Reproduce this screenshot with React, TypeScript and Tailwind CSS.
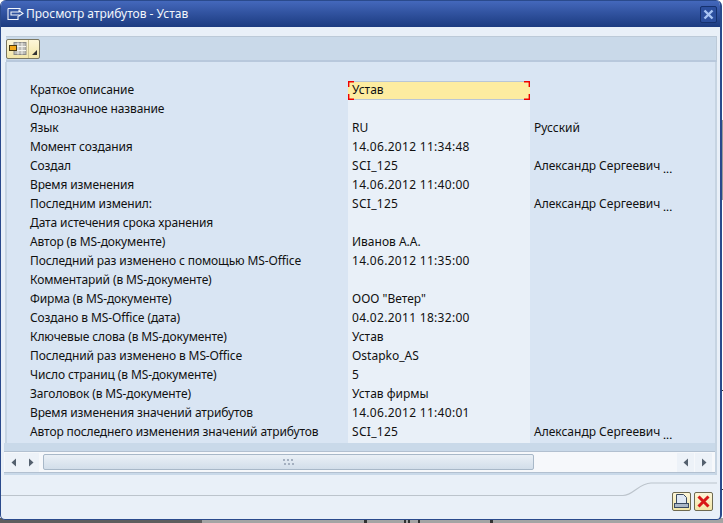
import React from "react";

const rows: [string, string, string, boolean?][] = [
  ["Краткое описание", "", ""],
  ["Однозначное название", "", ""],
  ["Язык", "RU", "Русский"],
  ["Момент создания", "14.06.2012 11:34:48", ""],
  ["Создал", "SCI_125", "Александр Сергеевич", true],
  ["Время изменения", "14.06.2012 11:40:00", ""],
  ["Последним изменил:", "SCI_125", "Александр Сергеевич", true],
  ["Дата истечения срока хранения", "", ""],
  ["Автор (в MS-документе)", "Иванов А.А.", ""],
  ["Последний раз изменено с помощью MS-Office", "14.06.2012 11:35:00", ""],
  ["Комментарий (в MS-документе)", "", ""],
  ["Фирма (в MS-документе)", "ООО \"Ветер\"", ""],
  ["Создано в MS-Office (дата)", "04.02.2011 18:32:00", ""],
  ["Ключевые слова (в MS-документе)", "Устав", ""],
  ["Последний раз изменено в MS-Office", "Ostapko_AS", ""],
  ["Число страниц (в MS-документе)", "5", ""],
  ["Заголовок (в MS-документе)", "Устав фирмы", ""],
  ["Время изменения значений атрибутов", "14.06.2012 11:40:01", ""],
  ["Автор последнего изменения значений атрибутов", "SCI_125", "Александр Сергеевич", true],
];

function Arrow({ dir }: { dir: "l" | "r" }) {
  return (
    <div className="w-[17px] h-[19px] bg-[#edf2f8] flex items-center justify-center">
      <svg width="6" height="9" viewBox="0 0 6 9">
        <path d={dir === "l" ? "M5 0.5V8.5L0.5 4.5Z" : "M1 0.5V8.5L5.5 4.5Z"} fill="#54606e" />
      </svg>
    </div>
  );
}

function Corner({ className, d }: { className: string; d: string }) {
  return (
    <svg className={`absolute z-10 ${className}`} width="6" height="6" viewBox="0 0 6 6" fill="none">
      <path d={d} stroke="#ee0000" strokeWidth="1.4" />
    </svg>
  );
}

export default function App() {
  return (
    <div className="relative w-[723px] h-[523px] overflow-hidden bg-white font-['Noto_Sans',sans-serif] text-[12px] text-[#111]">
      {/* what lies behind the dialog */}
      <div className="absolute left-0 bottom-0 w-[202px] h-[5px] bg-[#5e5e5e]" />
      <div className="absolute left-[202px] right-0 bottom-0 h-[5px] bg-[#a4a4a4]" />
      <div className="absolute left-[364px] bottom-0 w-[3px] h-[3px] bg-[#333]" />
      <div className="absolute left-[404px] bottom-0 w-[2px] h-[3px] bg-[#333]" />
      <div className="absolute left-[408px] bottom-0 w-[2px] h-[3px] bg-[#333]" />
      <div className="absolute left-[418px] bottom-0 w-[2px] h-[3px] bg-[#333]" />
      <div className="absolute left-[490px] bottom-0 w-[3px] h-[3px] bg-[#333]" />
      <div className="absolute right-0 top-[390px] w-[2px] h-[100px] border-t border-b border-[#333]" />
      <div className="absolute right-0 top-[120px] w-[2px] h-[80px] bg-[#9a9a9a]" />

      <div className="relative w-[722px] h-[520px] rounded-b-[5px] rounded-t-[6px] border-l border-r-2 border-b border-[#2a4a8c] bg-[#e9f0f8] flex flex-col overflow-hidden">
        {/* title bar */}
        <div className="h-[27px] -ml-px -mr-[2px] shrink-0 bg-gradient-to-b from-[#4468bc] to-[#1c3b80] border-t border-[#2a4a8c] flex items-center pl-[7px] pr-[5px] text-[#f2f6fc]">
          <svg width="17" height="14" viewBox="0 0 17 14" fill="none" stroke="#f2f6fc" strokeWidth="1.1">
            <path d="M1 1.5H13V3.5M1 1.5V12.5H11V9" />
            <path d="M4 5H12V3.5L16 6.5L12 9V8H4Z" />
          </svg>
          <span className="ml-[2px] text-[12px]">Просмотр атрибутов - Устав</span>
          <div className="ml-auto w-[17px] h-[17px] rounded-[2px] border border-[#16316e] bg-[#2c4f9e] flex items-center justify-center">
            <svg width="11" height="11" viewBox="0 0 11 11" stroke="#a8c4f4" strokeWidth="2.4">
              <path d="M1.5 1.5L9.5 9.5M9.5 1.5L1.5 9.5" />
            </svg>
          </div>
        </div>

        <div className="h-[9px] shrink-0" />

        {/* toolbar */}
        <div className="ml-[5px] w-[711px] h-[26px] shrink-0 bg-[#c9d9e9] border-t border-[#bccad8] border-r border-b-2 border-b-[#b8c8dc] flex items-center">
          <div className="w-[34px] h-[20px] rounded-[2px] border border-[#7a7660] bg-gradient-to-b from-[#fdf6d8] to-[#f2e6a8] flex items-center">
            <div className="w-[21px] flex justify-center">
              <svg width="18" height="13" viewBox="0 0 18 13">
                <rect x="5" y="0.5" width="12" height="12" fill="#bdbdb8" stroke="#8c8c88" />
                <path d="M9 0.5V12.5M13 0.5V12.5M5 4.5H17M5 8.5H17" stroke="#f4f4ee" />
                <rect x="0.5" y="3.5" width="7" height="5" fill="#f4a818" stroke="#4a3a10" />
              </svg>
            </div>
            <div className="w-px h-[18px] bg-[#cfc592]" />
            <div className="flex-1 flex items-end justify-center pb-[3px] h-full">
              <svg width="5" height="5" viewBox="0 0 5 5"><path d="M5 0V5H0Z" fill="#333" /></svg>
            </div>
          </div>
        </div>

        {/* table */}
        <div className="ml-[4px] w-[712px] h-[381px] shrink-0 bg-[#d9e5f3] border-l-2 border-r-2 border-[#c6d4e2] pt-[19px] pl-[23px] flex flex-col">
          {rows.map((r, i) => {
            const last = i === rows.length - 1;
            const pad = last ? "pb-[3px]" : "pb-[2px]";
            return (
              <div key={i} className={`${last ? "h-[20px]" : "h-[19px]"} shrink-0 flex items-stretch`}>
                <div className={`w-[318px] whitespace-nowrap flex items-center tracking-[-0.12px] ${pad}`}>{r[0]}</div>
                <div className={`relative w-[182px] flex items-center pl-[4px] ${pad} ${i === 0 ? "bg-[#fdeca0] border-y border-[#b9c6d6]" : "bg-[#e9f0f8]"} ${/\d\d/.test(r[1]) ? "tracking-[0.3px]" : ""}`}>
                  {i === 0 ? (
                    <>
                      Устав
                      <Corner className="left-0 top-[-1px]" d="M0.7 6V0.7H6" />
                      <Corner className="right-0 top-[-1px]" d="M0 0.7H5.3V6" />
                      <Corner className="left-0 bottom-[-1px]" d="M0.7 0V5.3H6" />
                      <Corner className="right-0 bottom-[-1px]" d="M0 5.3H5.3V0" />
                    </>
                  ) : (
                    r[1]
                  )}
                </div>
                <div className={`ml-[4px] flex items-center whitespace-nowrap ${pad}`}>
                  {r[2]}
                  {r[3] && <span className="ml-[3px] text-[9px] font-bold leading-none self-end tracking-[0.5px] text-black">...</span>}
                </div>
              </div>
            );
          })}
        </div>

        {/* band + scrollbar */}
        <div className="ml-[3px] w-[713px] h-[32px] shrink-0 bg-[#c9d9e9] border-r-2 border-[#c6d4e2] flex flex-col">
          <div className="h-[9px] shrink-0 border-b border-[#b2c0d0]" />
          <div className="h-[21px] shrink-0 bg-[#f6f8fb] flex items-center border-b border-[#b2c0d0]">
            <div className="flex pl-[1px]">
              <Arrow dir="l" />
              <Arrow dir="r" />
            </div>
            <div className="ml-[4px] w-[491px] h-[16px] rounded-[2px] border border-[#a8b8c8] bg-gradient-to-b from-[#eaf0f6] to-[#d2deea] flex items-center justify-center">
              <svg width="12" height="7" viewBox="0 0 12 7" fill="#a4b0c0">
                <path d="M0 0h2v2H0zM4 0h2v2H4zM8 0h2v2H8zM1 4h2v2H1zM5 4h2v2H5zM9 4h2v2H9z" />
              </svg>
            </div>
            <div className="ml-auto flex gap-px pr-[3px]">
              <Arrow dir="l" />
              <Arrow dir="r" />
            </div>
          </div>
        </div>

        {/* footer */}
        <div className="relative flex-1 flex items-start justify-end pr-[7px] pt-[17px] gap-[3px]">
          <svg className="absolute left-0 top-[7px]" width="721" height="15" viewBox="0 0 721 15" fill="none">
            <path d="M0 13.5H622C632 13.5 638 1 650 1H716" stroke="#bcc4cc" strokeWidth="1.2" />
          </svg>
          <button className="relative w-[19px] h-[19px] rounded-[2px] border border-[#6e6a50] bg-gradient-to-b from-[#fdf6d8] to-[#f2e6a8] flex items-center justify-center">
            <svg width="15" height="15" viewBox="0 0 15 15">
              <path d="M2.5 0.5H9.5L12.5 3.5V9.5H2.5Z" fill="#dfe8f4" stroke="#3a4a60" />
              <rect x="0.5" y="9.5" width="14" height="4" fill="#a9b6c6" stroke="#3a4a60" />
            </svg>
          </button>
          <button className="relative w-[19px] h-[19px] rounded-[2px] border border-[#6e6a50] bg-gradient-to-b from-[#fdf6d8] to-[#f2e6a8] flex items-center justify-center">
            <svg width="13" height="13" viewBox="0 0 13 13" stroke="#d81818" strokeWidth="3">
              <path d="M1.5 1.5L11.5 11.5M11.5 1.5L1.5 11.5" />
            </svg>
          </button>
        </div>
      </div>
    </div>
  );
}
